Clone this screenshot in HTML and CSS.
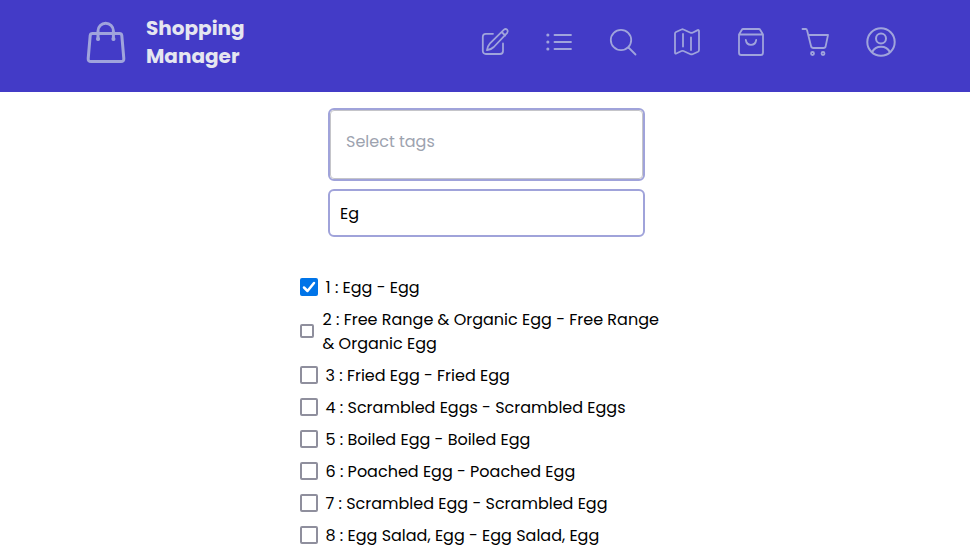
FILE: index.html
```html
<!DOCTYPE html>
<html lang="en">
<head>
<meta charset="utf-8">
<title>Shopping Manager</title>
<link rel="stylesheet" href="styles.css">
</head>
<body>
<header class="header">
  <div class="brand">
    <svg class="logo" viewBox="0 0 40 44" width="40" height="44"><path d="M6.500 13.500h27q2 0 2.300 2L37.800 38.500q.3 3-2.800 3H5Q1.900 41.500 2.200 38.500l2-23q.3-2 2.300-2Z M12 19V11a7.700 7.700 0 0 1 15.400 0v8"/><path class="dot" d="M12 19h.1M27.400 19h.1"/></svg>
    <h1 class="title">Shopping<br>Manager</h1>
  </div>
  <nav class="nav">
    <svg viewBox="0 0 32 32"><path d="M14 7.800H6.800a3 3 0 0 0-3 3V25a3 3 0 0 0 3 3H21a3 3 0 0 0 3-3v-7.500M8 24.200q.8-4.500 3-6.800L25 3.600q1.600-1.300 3.100.1 1.400 1.600.1 3.200L14.800 21q-2.300 2.300-6.800 3.200ZM22.700 6l3.500 3.500"/></svg>
    <svg viewBox="0 0 32 32"><path d="M11.500 9H28M11.500 16H28M11.500 23H28"/><path class="dot" d="M4.800 9h.1M4.800 16h.1M4.800 23h.1"/></svg>
    <svg viewBox="0 0 32 32"><circle cx="14" cy="14" r="10.200"/><path d="m21.500 21.500 7 7"/></svg>
    <svg viewBox="0 0 32 32"><path d="M4 7.500q0-1 1-1.500l5.500-2.500q1-.5 2 0l7 3.200q1 .4 2 0l5.200-2.600q1.300-.5 1.300 1V24q0 1.200-1 1.700l-5.500 2.500q-1 .4-2 0l-7-3.200q-1-.4-2 0l-5.200 2.500Q4 28 4 26.500ZM12 8v12.500M20 11.500V24"/></svg>
    <svg viewBox="0 0 32 32"><path d="M4 8.500 6.700 4Q7.200 3 8.300 3h15.400q1.100 0 1.600 1L28 8.500V26.700q0 2.300-2.300 2.300H6.300Q4 29 4 26.700ZM4 8.500h24M10.800 14c1 6.400 9.400 6.400 10.400 0"/></svg>
    <svg viewBox="0 0 32 32"><path d="M3.500 3h3.300q1 0 1.200 1l4 16q.4 2 2.500 2h10q1.900 0 2.200-1.900L29 9H9.200"/><circle cx="13.500" cy="27.500" r="1.500"/><circle cx="24" cy="27.500" r="1.500"/></svg>
    <svg class="user" viewBox="0 0 32 32"><circle cx="16" cy="16" r="13.700"/><circle cx="16" cy="12.500" r="5"/><path d="M7.200 26c3.300-7 14.300-7 17.600 0"/></svg>
  </nav>
</header>
<main class="main">
  <div class="tags"><div class="tags-inner">Select tags</div></div>
  <div class="search">Eg</div>
  <ul class="list">
    <li class="item"><span class="box checked"><svg viewBox="0 0 18 18"><path d="m4 9.500 3.500 3.500L14 5"/></svg></span><span class="label">1 : Egg - Egg</span></li>
    <li class="item tall"><span class="box small"></span><span class="label">2 : Free Range &amp; Organic Egg - Free Range<br>&amp; Organic Egg</span></li>
    <li class="item"><span class="box"></span><span class="label">3 : Fried Egg - Fried Egg</span></li>
    <li class="item"><span class="box"></span><span class="label">4 : Scrambled Eggs - Scrambled Eggs</span></li>
    <li class="item"><span class="box"></span><span class="label">5 : Boiled Egg - Boiled Egg</span></li>
    <li class="item"><span class="box"></span><span class="label">6 : Poached Egg - Poached Egg</span></li>
    <li class="item"><span class="box"></span><span class="label">7 : Scrambled Egg - Scrambled Egg</span></li>
    <li class="item"><span class="box"></span><span class="label">8 : Egg Salad, Egg - Egg Salad, Egg</span></li>
  </ul>
</main>
</body>
</html>
```
FILE: styles.css
```css
* { box-sizing: border-box; }
body { margin: 0; height: 551px; overflow: hidden; background: #fff; color: #000; font: 16px/24px Poppins, Inter, sans-serif; }
.header { height: 92px; padding: 0 73px 8px 86px; display: flex; justify-content: space-between; align-items: center; background: #433bc7; }
.brand { display: flex; align-items: center; gap: 20px; }
svg { display: block; fill: none; stroke: #a0a4dc; stroke-width: 2; stroke-linecap: round; stroke-linejoin: round; }
.logo { stroke-width: 3; }
.logo .dot { stroke-width: 4; }
.title { margin: 0; font-size: 20px; line-height: 28px; font-weight: 700; color: #e5e6f0; }
.nav { display: flex; gap: 32px; }
.nav svg { width: 32px; height: 32px; stroke-width: 1.800; }
.nav .dot { stroke-width: 3; }
.nav .user { margin-left: 2px; stroke-width: 2; }
.main { width: 370px; margin: 16px 0 0 300px; }
.tags, .search { width: 317px; margin-left: 28px; border: 2px solid #a0a3da; border-radius: 6px; }
.tags { height: 73px; }
.tags-inner { height: 100%; border: 1px solid #c5c5c9; border-radius: 4px; padding: 19px 15px; color: #9da3af; }
.search { height: 48px; margin-top: 8px; padding: 11px 10px 9px; }
.list { list-style: none; margin: 38px 0 0; padding: 0; display: flex; flex-direction: column; gap: 8px; }
.item { height: 24px; display: flex; align-items: center; gap: 7.500px; white-space: nowrap; }
.item.tall { height: 48px; gap: 8.500px; }
.label { padding-top: 2px; }
.box { width: 18px; height: 18px; flex: none; border: 2px solid #8f8f9d; border-radius: 2px; }
.box.small { width: 14px; height: 14px; }
.box.checked { border: 0; background: #0074e8; }
.checked svg { stroke: #fff; stroke-width: 2.500; }
```
